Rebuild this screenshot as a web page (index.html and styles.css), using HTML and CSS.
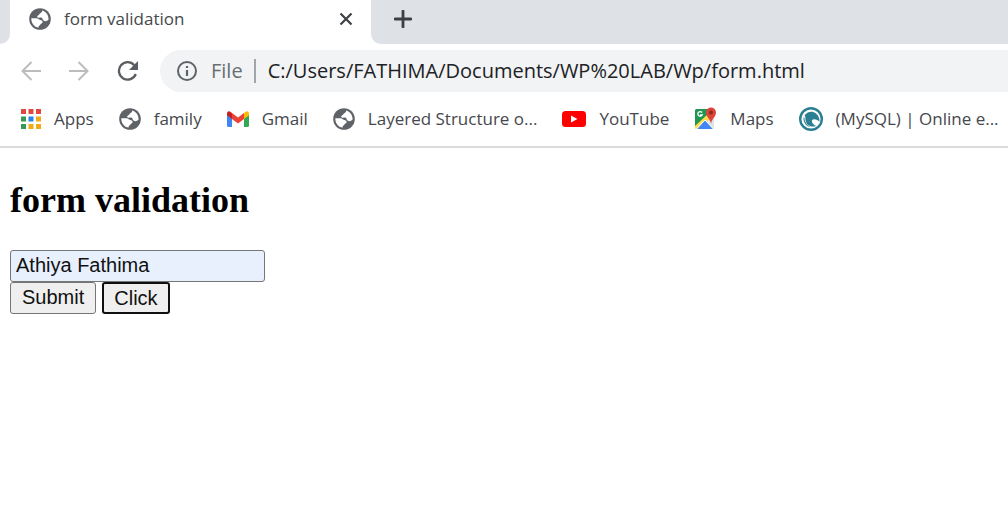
FILE: index.html
```html
<!DOCTYPE html>
<html lang="en">
<head>
<meta charset="utf-8">
<meta name="viewport" content="width=device-width, initial-scale=1">
<title>form validation</title>
<link rel="stylesheet" href="styles.css">
</head>
<body>
<svg class="symbols" aria-hidden="true">
  <symbol id="globe" viewBox="0 0 22 22">
    <circle cx="11" cy="11" r="10.800" fill="#5f6368"/>
    <path d="M13.200 2.500C17 3.500 19.800 7.200 19.600 11.500C17.800 13.500 16.200 13.600 14.500 12.600C13.200 11.600 14 9.800 12.300 9.600C11 9.500 8.800 10.200 8.200 9C7.700 7.600 9.900 7.400 10.400 6.200C11 5 13.300 4.800 13.200 2.500Z" fill="#fff"/>
    <path d="M2.300 10.200H7.300C9.800 10.200 9.900 12 12 12.200C14 12.500 14.200 14.700 12.500 15.500C11.200 16 11.300 17.700 9.700 18V19.600C5.200 19 2.200 15.200 2.300 10.200Z" fill="#fff"/>
  </symbol>
</svg>

<header class="browser">
  <div class="tabstrip">
    <div class="strip-start"></div>
    <div class="tab">
      <svg class="favicon" aria-hidden="true"><use href="#globe"/></svg>
      <span class="tab-title">form validation</span>
      <button class="icon-button" type="button" aria-label="Close tab">
        <svg width="14" height="14" viewBox="0 0 14 14"><path d="M1.500 1.500L12.500 12.500M12.500 1.500L1.500 12.500" stroke="#3c4043" stroke-width="2.200" fill="none"/></svg>
      </button>
    </div>
    <div class="strip-end">
      <button class="icon-button" type="button" aria-label="New tab">
        <svg width="18" height="18" viewBox="0 0 18 18"><path d="M9 1V17M1 9H17" stroke="#3c4043" stroke-width="2.800" stroke-linecap="round"/></svg>
      </button>
    </div>
  </div>

  <div class="toolbar">
    <nav class="nav-buttons" aria-label="History">
      <button class="icon-button" type="button" aria-label="Back">
        <svg width="20" height="20" viewBox="0 0 20 20"><path d="M20 10H1.500M10.500 1L1.500 10L10.500 19" stroke="#babcbe" stroke-width="2" fill="none"/></svg>
      </button>
      <button class="icon-button" type="button" aria-label="Forward">
        <svg width="20" height="20" viewBox="0 0 20 20"><path d="M0 10H18.500M9.500 1L18.500 10L9.500 19" stroke="#babcbe" stroke-width="2" fill="none"/></svg>
      </button>
      <button class="icon-button" type="button" aria-label="Reload">
        <svg width="22" height="20" viewBox="0 0 22 20"><path d="M18.800 13A8.700 8.700 0 1 1 17.300 4.300" stroke="#5a5d61" stroke-width="2.300" fill="none"/><path d="M21 0V9H12Z" fill="#5a5d61"/></svg>
      </button>
    </nav>
    <div class="omnibox">
      <svg class="info" viewBox="0 0 20 20" aria-hidden="true"><circle cx="10" cy="10" r="9" fill="none" stroke="#5f6368" stroke-width="2"/><path d="M10 9V15M10 5V7" stroke="#5f6368" stroke-width="2.200"/></svg>
      <span class="scheme">File</span>
      <input class="address" type="text" aria-label="Address" value="C:/Users/FATHIMA/Documents/WP%20LAB/Wp/form.html">
    </div>
  </div>

  <nav class="bookmarks" aria-label="Bookmarks">
    <a class="bookmark" href="#apps">
      <svg width="20" height="20" viewBox="0 0 20 20" aria-hidden="true"><path d="M0 0h5v5H0zM7.500 0h5v5h-5zM15 0h5v5h-5z" fill="#e34840"/><path d="M0 7.500h5v5H0zM0 15h5v5H0z" fill="#349a55"/><path d="M7.500 7.500h5v5h-5z" fill="#2a84ea"/><path d="M15 7.500h5v5h-5zM7.500 15h5v5h-5zM15 15h5v5h-5z" fill="#efaa18"/></svg>
      <span>Apps</span>
    </a>
    <a class="bookmark" href="#family">
      <svg class="favicon" aria-hidden="true"><use href="#globe"/></svg>
      <span>family</span>
    </a>
    <a class="bookmark" href="#gmail">
      <svg width="22" height="16" viewBox="0 0 22 16" aria-hidden="true"><path d="M0 3L5 6V16H1.500Q0 16 0 14.500Z" fill="#4285f4"/><path d="M17 6L22 3V14.500Q22 16 20.500 16H17Z" fill="#34a853"/><path d="M5 2L11 6.500L17 2V8L11 12.500L5 8Z" fill="#ea4335"/><path d="M0 3Q0 0 2.500 .3L5 2V8L0 4.300Z" fill="#c5221f"/><path d="M17 2L19.500 .3Q22 0 22 3V4.300L17 8Z" fill="#fbbc04"/></svg>
      <span>Gmail</span>
    </a>
    <a class="bookmark" href="#layered">
      <svg class="favicon" aria-hidden="true"><use href="#globe"/></svg>
      <span>Layered Structure o...</span>
    </a>
    <a class="bookmark" href="#youtube">
      <svg width="24" height="16" viewBox="0 0 24 16" aria-hidden="true"><rect width="24" height="16" rx="3.500" fill="#f00"/><path d="M9 4.500L15.500 8L9 11.500Z" fill="#fff"/></svg>
      <span>YouTube</span>
    </a>
    <a class="bookmark" href="#maps">
      <svg width="23" height="24" viewBox="0 0 23 24" aria-hidden="true"><rect x="1" y="2" width="19" height="20" rx="1.500" fill="#e1e4e6"/><path d="M1 3.500Q1 2 2.500 2H16L15 8L1 21Z" fill="#219653"/><path d="M1 19L15 6L18 10L4 22H2.500Q1 22 1 20.500Z" fill="#fddd4b"/><path d="M3 22L11 13L19 22Z" fill="#4285f4"/><path d="M2.500 22L11 13L19.500 22" stroke="#fff" fill="none"/><path d="M8 5.500A2.300 2.300 0 1 0 8.200 8H6" stroke="#fff" stroke-width="1.300" fill="none"/><path d="M17 17C16.500 12 12 10 12 5.500A5 5 0 0 1 22 5.500C22 10 17.500 12 17 17Z" fill="#dc4437"/><circle cx="17" cy="5.500" r="2" fill="#8c2a22"/></svg>
      <span>Maps</span>
    </a>
    <a class="bookmark" href="#mysql">
      <svg width="24" height="24" viewBox="0 0 24 24" aria-hidden="true"><circle cx="12" cy="12" r="10.800" fill="#fff" stroke="#2b7f92" stroke-width="2.400"/><path d="M5.500 8.500C8 4.500 13.500 3.500 17 6.500C19.500 8.500 20.800 11.500 20.500 14.800C18.500 12.500 15.500 11.500 13.300 12.700C12 14.500 14 17.500 17.200 19C11.500 21 7 17.500 6.500 13C6.200 11 6.800 9.700 5.500 8.500Z" fill="#2b7f92"/><path d="M4.500 10.500C4 15.500 7.500 19.500 12 20.300C8.500 18.500 5.500 15.500 5.400 10.500Z" fill="#2b7f92"/></svg>
      <span>(MySQL) | Online e...</span>
    </a>
  </nav>
</header>

<main class="page">
  <h2 class="heading">form validation</h2>
  <form class="form">
    <input class="field" type="text" aria-label="Name" value="Athiya Fathima">
    <div class="actions">
      <button class="button" type="button">Submit</button>
      <button class="button button-focused" type="button">Click</button>
    </div>
  </form>
</main>
</body>
</html>
```
FILE: styles.css
```css
* {
  box-sizing: border-box;
}

body {
  margin: 0;
  background: #fff;
  font-family: "Open Sans", "Noto Sans", sans-serif;
}

svg {
  display: block;
  flex: none;
}

.symbols {
  position: absolute;
  width: 0;
  height: 0;
}

.browser {
  border-bottom: 2px solid #d9dadc;
  color: #45484c;
  font-size: 17px;
  line-height: 24px;
}

.favicon {
  width: 22px;
  height: 22px;
}

.icon-button {
  padding: 0;
  border: 0;
  background: none;
}

.tabstrip {
  display: flex;
  height: 44px;
}

.strip-start {
  width: 10px;
  background: #dee1e6;
  border-bottom-right-radius: 10px;
}

.tab {
  display: flex;
  align-items: center;
  gap: 13px;
  width: 361px;
  padding: 0 18px 6px 19px;
}

.tab-title {
  flex: 1;
}

.strip-end {
  display: flex;
  flex: 1;
  align-items: center;
  padding: 0 23px 6px;
  background: #dee1e6;
  border-bottom-left-radius: 10px;
}

.toolbar {
  display: flex;
  align-items: center;
  padding-top: 6px;
}

.nav-buttons {
  display: flex;
  gap: 28px;
  width: 160px;
  padding-left: 21px;
}

.omnibox {
  display: flex;
  flex: 1;
  align-items: center;
  height: 42px;
  padding-left: 17px;
  background: #f1f3f4;
  border-radius: 21px 0 0 21px;
  font-size: 20px;
}

.info {
  width: 20px;
  height: 20px;
}

.scheme {
  margin-left: 14px;
  padding-right: 11px;
  border-right: 2px solid #a2a5a9;
  color: #6a6e73;
}

.address {
  flex: 1;
  min-width: 0;
  padding: 0 0 0 12px;
  border: 0;
  background: none;
  color: #202124;
  font: inherit;
}

.bookmarks {
  display: flex;
  gap: 25px;
  padding: 15px 0 15px 21px;
  overflow: hidden;
}

.bookmark {
  display: flex;
  align-items: center;
  gap: 13px;
  color: inherit;
  text-decoration: none;
  white-space: nowrap;
}

.page {
  padding: 31px 10px;
}

.heading {
  margin: 0 0 29px;
  color: #000;
  font: bold 36px/42px "Liberation Serif", serif;
}

.field,
.button {
  display: block;
  height: 32px;
  border: 1px solid #767676;
  border-radius: 3px;
  color: #111;
  font: 20px/28px "Liberation Sans", sans-serif;
}

.field {
  width: 255px;
  padding: 0 5px 2px;
  background: #e8f0fe;
}

.actions {
  display: flex;
  gap: 6px;
}

.button {
  padding: 0 11px 2px;
  background: #efefef;
}

.button-focused {
  padding: 0 10px 2px;
  border: 2px solid #101010;
}
```
